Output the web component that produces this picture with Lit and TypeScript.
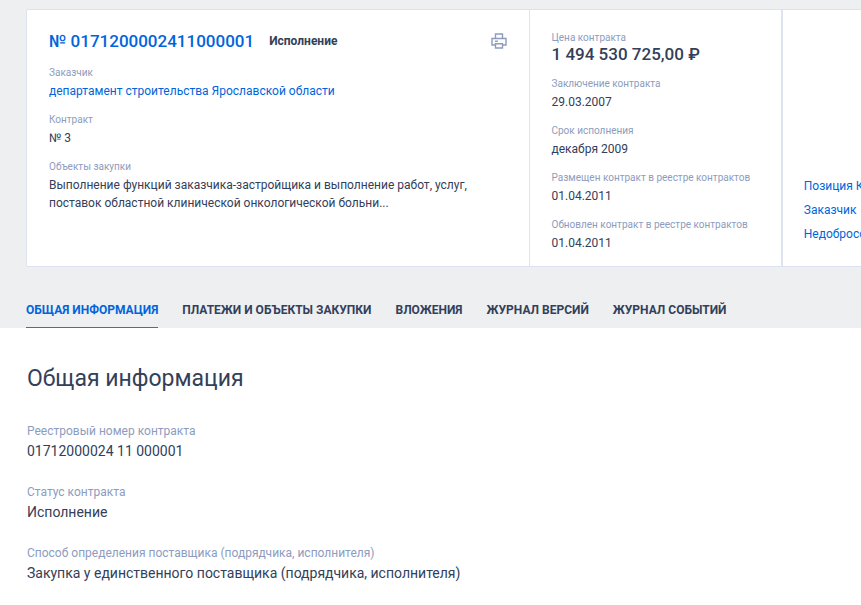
import { LitElement, html, css } from "lit";
import { customElement } from "lit/decorators.js";

interface Field {
  label: string;
  value: string;
  href?: string;
  price?: boolean;
}

const contractFields: Field[] = [
  { label: "Заказчик", value: "департамент строительства Ярославской области", href: "#customer" },
  { label: "Контракт", value: "№ 3" },
  {
    label: "Объекты закупки",
    value: "Выполнение функций заказчика-застройщика и выполнение работ, услуг, поставок областной клинической онкологической больни...",
  },
];

const dateFields: Field[] = [
  { label: "Цена контракта", value: "1 494 530 725,00 ₽", price: true },
  { label: "Заключение контракта", value: "29.03.2007" },
  { label: "Срок исполнения", value: "декабря 2009" },
  { label: "Размещен контракт в реестре контрактов", value: "01.04.2011" },
  { label: "Обновлен контракт в реестре контрактов", value: "01.04.2011" },
];

const relatedLinks = ["Позиция КТРУ", "Заказчик", "Недобросовестный поставщик"];

const tabs = ["Общая информация", "Платежи и объекты закупки", "Вложения", "Журнал версий", "Журнал событий"];

const generalInfo: Field[] = [
  { label: "Реестровый номер контракта", value: "01712000024 11 000001" },
  { label: "Статус контракта", value: "Исполнение" },
  { label: "Способ определения поставщика (подрядчика, исполнителя)", value: "Закупка у единственного поставщика (подрядчика, исполнителя)" },
];

@customElement("app-root")
export class AppRoot extends LitElement {
  static styles = css`
    :host {
      display: block;
      min-height: 100vh;
      overflow: hidden;
      background: #fff;
      color: #334059;
      font-family: Roboto, "Liberation Sans", sans-serif;
      font-size: 12px;
      line-height: 18px;
    }
    a {
      color: #0065dc;
      text-decoration: none;
    }
    dl,
    dd,
    ul,
    h1,
    h2 {
      margin: 0;
      padding: 0;
      font-weight: 400;
    }
    .top {
      background: #eeeff1;
      padding: 9px 26px 0;
    }
    .card {
      display: grid;
      grid-template-columns: 2fr 1fr 1fr;
      min-width: 1007px;
      min-height: 258px;
      box-sizing: border-box;
      background: #fff;
      border: 1px solid #dbe3ee;
      border-radius: 2px;
    }
    .column {
      padding: 22px;
      border-right: 1px solid #dee3f0;
    }
    .column.dates {
      padding-top: 21px;
      padding-bottom: 12px;
      border-right: 0;
    }
    .column.related {
      padding-left: 21px;
      padding-bottom: 23px;
      border-left: 2px solid #dee3f0;
      border-right: 0;
      display: flex;
      flex-direction: column;
      justify-content: flex-end;
    }
    .heading {
      display: flex;
      align-items: center;
      height: 18px;
      margin-bottom: 16px;
    }
    .number {
      font-size: 17px;
      font-weight: 500;
    }
    .status {
      margin-left: 15px;
      font-weight: 700;
    }
    .print {
      margin-left: auto;
      display: flex;
      padding: 0;
      border: 0;
      background: none;
      cursor: pointer;
    }
    .fields {
      display: flex;
      flex-direction: column;
      gap: 13px;
    }
    .fields dt {
      color: #8d9cbe;
      font-size: 10px;
      line-height: 14px;
    }
    .fields dd {
      padding-top: 2px;
    }
    .fields .price {
      padding-top: 0;
      font-size: 17px;
      line-height: 19px;
      font-weight: 500;
    }
    .contract .fields {
      max-width: 420px;
    }
    .links {
      list-style: none;
      display: flex;
      flex-direction: column;
      gap: 6px;
      white-space: nowrap;
    }
    .tabs {
      display: flex;
      gap: 24px;
      padding-top: 34px;
      white-space: nowrap;
    }
    .tab {
      padding-bottom: 8px;
      border-bottom: 1px solid transparent;
      color: #334059;
      font-weight: 700;
      text-transform: uppercase;
    }
    .tab.active {
      color: #0065dc;
      border-color: #1b7bd0;
    }
    .content {
      padding: 37px 27px;
    }
    .title {
      font-size: 23px;
      line-height: 28px;
      margin-bottom: 28px;
    }
    .info {
      display: flex;
      flex-direction: column;
      gap: 21px;
    }
    .info dt {
      color: #8d9cbe;
      line-height: 20px;
    }
    .info dd {
      font-size: 14px;
      line-height: 20px;
    }
  `;

  private renderFields(fields: Field[]) {
    return fields.map(
      (f) => html`<div>
        <dt>${f.label}</dt>
        <dd class=${f.price ? "price" : ""}>${f.href ? html`<a href=${f.href}>${f.value}</a>` : f.value}</dd>
      </div>`
    );
  }

  render() {
    return html`
      <header class="top">
        <section class="card">
          <div class="column contract">
            <div class="heading">
              <h1 class="number"><a href="#contract">№ 0171200002411000001</a></h1>
              <span class="status">Исполнение</span>
              <button class="print" type="button" aria-label="Печать">
                <svg width="16" height="16" viewBox="0 0 16 16" fill="none" stroke="#8d9cbe" stroke-width="1.4">
                  <path d="M4.5 5.5V1h7v4.5M4.5 12H1V5.5h14V12h-3.5M4.5 10.7h7V15h-7z" />
                  <path d="M4 8.2h3" />
                </svg>
              </button>
            </div>
            <dl class="fields">${this.renderFields(contractFields)}</dl>
          </div>
          <div class="column dates">
            <dl class="fields">${this.renderFields(dateFields)}</dl>
          </div>
          <div class="column related">
            <ul class="links">
              ${relatedLinks.map((text) => html`<li><a href="#related">${text}</a></li>`)}
            </ul>
          </div>
        </section>
        <nav class="tabs">
          ${tabs.map((text, i) => html`<a class="tab ${i === 0 ? "active" : ""}" href="#tab-${i + 1}">${text}</a>`)}
        </nav>
      </header>
      <main class="content">
        <h2 class="title">Общая информация</h2>
        <dl class="info">${this.renderFields(generalInfo)}</dl>
      </main>
    `;
  }
}
